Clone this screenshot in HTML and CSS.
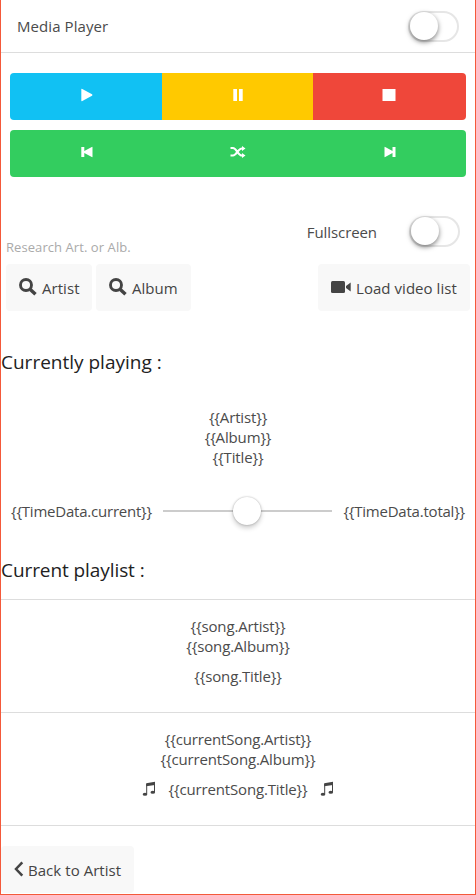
FILE: index.html
```html
<!DOCTYPE html>
<html lang="en">
<head>
<meta charset="utf-8">
<title>Media Player</title>
<link rel="stylesheet" href="styles.css">
</head>
<body>
<main class="player">
  <header class="header">
    <span class="t title">Media Player</span>
    <span class="toggle"><span class="toggle-handle"></span></span>
  </header>

  <section class="controls">
    <div class="bar">
      <a class="bar-btn blue"><svg class="nudge" width="12" height="14" viewBox="0 0 12 14"><path d="M.3 1.400Q.3.4 1.300.9L11 6.300Q12 7 11 7.700L1.300 13.100Q.3 13.600.3 12.600Z"/></svg></a>
      <a class="bar-btn yellow"><svg width="12" height="14" viewBox="0 0 12 14"><path d="M1.300 1H5V13H1.300ZM7 1H10.700V13H7Z"/></svg></a>
      <a class="bar-btn red"><svg width="14" height="14" viewBox="0 0 14 14"><path d="M.5 1H13.500V13H.5Z"/></svg></a>
    </div>
    <div class="bar green">
      <a class="bar-btn"><svg class="nudge" width="12" height="12" viewBox="0 0 12 12"><path d="M.3 1H3.300V5L10.800.9Q11.500.6 11.500 1.200V10.800Q11.500 11.400 10.800 11.100L3.300 7V11H.3Z"/></svg></a>
      <a class="bar-btn"><svg width="16" height="12" viewBox="0 0 16 12"><path d="M.5 2H3C6.500 2 8 9.600 12 9.600H12.500M.5 9.600H3C6.500 9.600 8 2.400 12 2.400H12.500" fill="none" stroke="#fff" stroke-width="2"/><path d="M12 0 15.500 2.500 12 5ZM12 7 15.500 9.500 12 12Z"/></svg></a>
      <a class="bar-btn"><svg width="12" height="12" viewBox="0 0 12 12"><path d="M11.500 1H8.500V5L1.200.9Q.5.6.5 1.200V10.800Q.5 11.400 1.200 11.100L8.500 7V11H11.500Z"/></svg></a>
    </div>
  </section>

  <section class="fullscreen">
    <span class="t hint">Research Art. or Alb.</span>
    <span class="t full-label">Fullscreen</span>
    <span class="toggle"><span class="toggle-handle"></span></span>
  </section>

  <section class="search">
    <button class="btn artist"><svg width="18" height="18" viewBox="0 0 18 18"><circle cx="7" cy="7" r="5.500" fill="none" stroke="#444" stroke-width="2.900"/><path d="M11.300 11.500 16.500 16.300" stroke="#444" stroke-width="3.500"/></svg><span class="t">Artist</span></button>
    <button class="btn album"><svg width="18" height="18" viewBox="0 0 18 18"><circle cx="7" cy="7" r="5.500" fill="none" stroke="#444" stroke-width="2.900"/><path d="M11.300 11.500 16.500 16.300" stroke="#444" stroke-width="3.500"/></svg><span class="t">Album</span></button>
    <button class="btn video"><svg width="20" height="12" viewBox="0 0 20 12"><rect width="14" height="12" rx="1.500"/><path d="M15 5 19.700 1.500V10.500L15 7Z"/></svg><span class="t">Load video list</span></button>
  </section>

  <h4 class="heading"><span class="t h-playing">Currently playing :</span></h4>
  <section class="lines now">
    <div><span class="t">{{Artist}}</span></div>
    <div><span class="t">{{Album}}</span></div>
    <div><span class="t">{{Title}}</span></div>
  </section>
  <section class="range">
    <span class="t time time-current">{{TimeData.current}}</span>
    <span class="track"><span class="thumb"></span></span>
    <span class="t time">{{TimeData.total}}</span>
  </section>

  <h4 class="heading second"><span class="t h-list">Current playlist :</span></h4>
  <section class="lines item">
    <div><span class="t">{{song.Artist}}</span></div>
    <div><span class="t">{{song.Album}}</span></div>
    <div class="song"><span class="t">{{song.Title}}</span></div>
  </section>
  <section class="lines item">
    <div><span class="t">{{currentSong.Artist}}</span></div>
    <div><span class="t">{{currentSong.Album}}</span></div>
    <div class="song">
      <svg width="14" height="16" viewBox="0 0 14 16"><path d="M4.200 2.200 13 .8V4L4.200 5.200Z"/><path d="M4.700 3V13M12.500 2V11" stroke="#444" fill="none"/><ellipse cx="3" cy="13.300" rx="2.300" ry="1.500"/><ellipse cx="10.800" cy="11.300" rx="2.300" ry="1.500"/></svg>
      <span class="t">{{currentSong.Title}}</span>
      <svg width="14" height="16" viewBox="0 0 14 16"><path d="M4.200 2.200 13 .8V4L4.200 5.200Z"/><path d="M4.700 3V13M12.500 2V11" stroke="#444" fill="none"/><ellipse cx="3" cy="13.300" rx="2.300" ry="1.500"/><ellipse cx="10.800" cy="11.300" rx="2.300" ry="1.500"/></svg>
    </div>
  </section>

  <footer class="footer">
    <button class="btn back"><svg width="10" height="16" viewBox="0 0 10 16"><path d="M8.300 1.300 2 8 8.300 14.700" fill="none" stroke="#444" stroke-width="2.500"/></svg><span class="t">Back to Artist</span></button>
  </footer>
</main>
</body>
</html>
```
FILE: styles.css
```css
* { box-sizing: border-box; }
body {
  margin: 0;
  background: #fff;
  color: #4b4b4b;
  font: 15px/20px "Open Sans", "Noto Sans", sans-serif;
}
svg { display: block; flex: none; fill: #444; }
.t { white-space: nowrap; }
.title { letter-spacing: .08px; }
.player {
  height: 895px;
  border: 1px solid #f4593a;
  border-top: 0;
  overflow: hidden;
}
.header {
  height: 53px;
  padding: 0 16px;
  display: flex;
  align-items: center;
  justify-content: space-between;
  border-bottom: 1px solid #ddd;
}
.toggle {
  width: 51px;
  height: 31px;
  flex: none;
  border: 2px solid #e6e6e6;
  border-radius: 16px;
}
.toggle-handle {
  display: block;
  width: 28px;
  height: 28px;
  margin: -1px -.5px;
  border-radius: 50%;
  background: #fff;
  box-shadow: 0 2px 5px rgba(0, 0, 0, .5);
}
.controls {
  padding: 20px 9px 0;
  display: grid;
  gap: 10px;
}
.bar {
  height: 47px;
  display: grid;
  grid-template-columns: 152px 151px 153px;
  border-radius: 4px;
  overflow: hidden;
}
.bar-btn {
  display: flex;
  justify-content: center;
  padding-top: 15px;
}
.bar svg { fill: #fff; }
.bar .nudge { margin-left: 2px; }
.green .bar-btn { padding-top: 16px; }
.blue { background: #11c1f3; }
.yellow { background: #ffc900; }
.red { background: #ef473a; }
.red svg { margin-right: 1px; }
.green { background: #33cd5f; }
.fullscreen {
  height: 87px;
  padding: 39px 15px 0 5px;
  display: flex;
  align-items: flex-start;
}
.hint {
  color: #aaa;
  font-size: 13px;
  letter-spacing: .07px;
  margin-top: 21px;
}
.full-label { margin: 6px 32px 0 auto; letter-spacing: -.08px; }
.search {
  padding: 0 5px;
  display: flex;
  gap: 4px;
}
.btn {
  height: 47px;
  padding: 0 13px;
  display: flex;
  align-items: center;
  gap: 5px;
  border: 0;
  border-radius: 4px;
  background: #f8f8f8;
  color: #444;
  font: inherit;
  letter-spacing: .05px;
}
.btn svg { margin-top: -1px; }
.btn .t { margin-top: 1px; }
.artist { width: 86px; }
.album { width: 95px; }
.video { width: 152px; margin-left: auto; }
.heading {
  margin: 39px 0 0;
  height: 24px;
  color: #222;
  font-size: 19px;
  font-weight: 400;
  line-height: 24px;
}
.h-list { letter-spacing: -.08px; }
.lines { text-align: center; letter-spacing: -.15px; }
.now { margin-top: 33px; }
.range {
  height: 30px;
  margin-top: 29px;
  padding: 0 10px;
  display: flex;
  align-items: center;
}
.time { letter-spacing: -.22px; }
.time-current { width: 152px; }
.time:last-child { margin-left: auto; }
.track {
  width: 169px;
  height: 2px;
  display: flex;
  align-items: center;
  justify-content: center;
  background: #ccc;
}
.thumb {
  width: 28px;
  height: 28px;
  margin-right: 1px;
  flex: none;
  border-radius: 50%;
  background: #fff;
  box-shadow: 0 0 2px rgba(0, 0, 0, .3), 0 3px 5px rgba(0, 0, 0, .2);
}
.heading.second { margin-top: 32px; }
.item {
  height: 113px;
  padding-top: 16px;
  border-top: 1px solid #ddd;
}
.second + .item { margin-top: 17px; }
.song {
  margin-top: 10px;
  display: flex;
  justify-content: center;
  gap: 12px;
}
.song svg { margin-top: 2px; }
.footer {
  padding-top: 20px;
  border-top: 1px solid #ddd;
}
.back { width: 133px; gap: 4px; }
```
